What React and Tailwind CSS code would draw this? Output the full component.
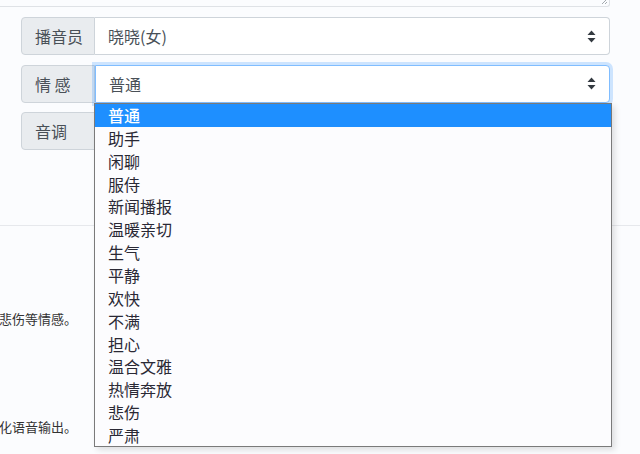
import React from 'react';

const emotions = [
    '普通', '助手', '闲聊', '服侍', '新闻播报', '温暖亲切', '生气', '平静',
    '欢快', '不满', '担心', '温合文雅', '热情奔放', '悲伤', '严肃'
];

const font = { fontFamily: '"Noto Sans CJK SC", "Noto Sans", sans-serif' };

// little up/down arrows of a native select
const SelectArrows = () => (
    <svg width="9" height="13" viewBox="0 0 9 13" className="shrink-0">
        <path d="M4.5 0.5 L8.5 5 L0.5 5 Z" fill="#343a40" />
        <path d="M4.5 12.5 L8.5 8 L0.5 8 Z" fill="#343a40" />
    </svg>
);

const FieldRow = ({ label, value, focused }) => (
    <div className="flex h-[38px]">
        <div className="w-[74px] shrink-0 flex items-center pl-[13px] bg-[#e9ecef] border border-[#ced4da] rounded-l-[4px] text-[16px] text-[#495057]">
            {label}
        </div>
        <div
            className={
                focused
                    ? 'flex-1 flex items-center justify-between pl-[13px] pr-[13px] bg-white border border-[#80bdff] rounded-r-[4px] shadow-[0_0_0_3px_rgba(0,123,255,0.18)] text-[16px] text-[#495057]'
                    : 'flex-1 flex items-center justify-between pl-[13px] pr-[13px] bg-white border border-l-0 border-[#ced4da] rounded-r-[4px] text-[16px] text-[#495057]'
            }
        >
            <span>{value}</span>
            <SelectArrows />
        </div>
    </div>
);

const App = () => {
    return (
        <div className="relative w-[640px] h-[454px] overflow-hidden bg-[#fbfcfe]" style={font}>
            {/* top part of the form */}
            <div className="h-[226px] border-b border-[#e6e8ec]">
                {/* bottom edge of a textarea */}
                <div className="relative h-[7px] w-[610px] border-b border-r border-[#dfe2e6] rounded-br-[3px]">
                    <svg width="7" height="7" viewBox="0 0 7 7" className="absolute right-[1px] bottom-[1px]">
                        <path d="M1 6 L6 1 M4 6 L6 4" stroke="#9aa0a6" strokeWidth="0.9" />
                    </svg>
                </div>

                <div className="flex flex-col gap-[9.5px] pl-[21px] pt-[10px] w-[610px]">
                    <FieldRow label="播音员" value="晓晓(女)" />
                    <FieldRow label="情 感" value="普通" focused />
                    {/* value hidden under the open list */}
                    <FieldRow label="音调" value="" />
                </div>
            </div>

            {/* descriptions below, cut off on the left */}
            <div className="text-[13px] text-[#333] whitespace-nowrap">
                <p className="pt-[84px] leading-[18px] -ml-[1px]">悲伤等情感。</p>
                <p className="pt-[90px] leading-[18px] -ml-[1px]">化语音输出。</p>
            </div>

            {/* open native dropdown list */}
            <div className="absolute left-[94px] top-[103px] w-[518px] h-[344px] bg-[#fcfcfe] border border-[#7a7a7a] shadow-[3px_3px_6px_rgba(0,0,0,0.12)]">
                {emotions.map((item, i) => (
                    <div
                        key={item}
                        className={
                            i === 0
                                ? 'h-[22.87px] leading-[22.87px] pl-[13px] text-[16px] bg-[#1e8fff] text-white font-medium'
                                : 'h-[22.87px] leading-[22.87px] pl-[13px] text-[16px] text-[#2a2935]'
                        }
                    >
                        {item}
                    </div>
                ))}
            </div>
        </div>
    );
};

export default App;
